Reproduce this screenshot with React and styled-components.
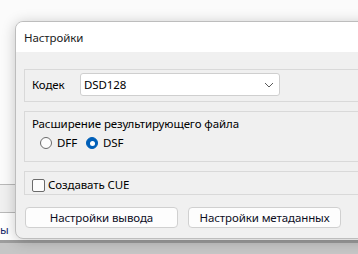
import React from "react";
import styled, { createGlobalStyle } from "styled-components";

const Global = createGlobalStyle`
  html, body { margin: 0; padding: 0; }
  body {
    font-family: "Noto Sans", "Open Sans", sans-serif;
    font-size: 11.5px;
    letter-spacing: -0.1px;
    color: #000;
  }
  * { box-sizing: border-box; }
`;

const Screen = styled.div`
  position: relative;
  width: 358px;
  height: 254px;
  overflow: hidden;
  background: #fafafa;
`;

const BgApp = styled.div`
  display: flex;
  flex-direction: column;
  height: 100%;
`;

const BgTop = styled.div`
  flex: 0 0 184px;
  background: #fbfbfb;
`;

const BgToolbar = styled.div`
  flex: 0 0 29px;
  background: #f0f0f0;
  border-top: 1px solid #b9b9b9;
  border-bottom: 1px solid #b9b9b9;
`;

const BgList = styled.div`
  flex: 0 0 27px;
  background: #ffffff;
  display: flex;
  align-items: flex-end;
  padding-bottom: 2px;
`;

const BgText = styled.span`
  color: #1a2a6a;
  line-height: 16px;
`;

const BgStatus = styled.div`
  flex: 1;
  background: #c6c6c6;
  border-top: 3px solid #9d9d9d;
`;

const Dialog = styled.div`
  position: absolute;
  left: 15px;
  top: 21px;
  width: 380px;
  height: 218px;
  background: #f0f0f0;
  border: 1px solid #bdbdbd;
  border-radius: 8px;
  overflow: hidden;
  box-shadow: 0 2px 14px rgba(0, 0, 0, 0.22);
  display: flex;
  flex-direction: column;
`;

const TitleBar = styled.div`
  flex: 0 0 30px;
  background: #ffffff;
  display: flex;
  align-items: center;
  padding-left: 8px;
  padding-top: 1px;
  color: #1b1b1b;
`;

const Body = styled.div`
  flex: 1;
  display: flex;
  flex-direction: column;
  padding: 17px 0 0 8px;
`;

const Group = styled.div`
  border: 1px solid #d9d9d9;
  margin-bottom: ${(p) => p.$gap ?? 9}px;
  padding: ${(p) => p.$pad};
  display: flex;
  flex-direction: ${(p) => (p.$column ? "column" : "row")};
  align-items: ${(p) => (p.$column ? "flex-start" : "center")};
`;

const Label = styled.span`
  width: 48px;
  line-height: 16px;
`;

const Combo = styled.div`
  width: 200px;
  height: 23px;
  background: #fff;
  border: 1px solid #cfcfcf;
  border-radius: 3px;
  display: flex;
  align-items: center;
  justify-content: space-between;
  padding: 0 5px 0 3px;
`;

const Caption = styled.div`
  line-height: 16px;
  margin-bottom: 3px;
`;

const RadioRow = styled.div`
  display: flex;
  align-items: center;
  gap: 9px;
  padding-left: 8px;
`;

const RadioItem = styled.label`
  display: flex;
  align-items: center;
  gap: 5px;
  line-height: 16px;
`;

const RadioCircle = styled.span`
  width: 12px;
  height: 12px;
  border-radius: 50%;
  background: ${(p) => (p.$on ? "#005fb8" : "#fdfdfd")};
  border: 1px solid ${(p) => (p.$on ? "#005fb8" : "#6b6b6b")};
  display: flex;
  align-items: center;
  justify-content: center;
  &::after {
    content: "";
    display: ${(p) => (p.$on ? "block" : "none")};
    width: 5px;
    height: 5px;
    border-radius: 50%;
    background: #fff;
  }
`;

const CheckItem = styled.label`
  display: flex;
  align-items: center;
  gap: 3px;
  line-height: 16px;
`;

const CheckBox = styled.span`
  width: 13px;
  height: 13px;
  border: 1px solid #6b6b6b;
  border-radius: 2px;
  background: #fdfdfd;
`;

const ButtonRow = styled.div`
  display: flex;
  gap: 10px;
  padding-left: 1px;
  margin-top: 12px;
`;

const Button = styled.div`
  width: 153px;
  height: 21px;
  background: #fdfdfd;
  border: 1px solid #d0d0d0;
  border-radius: 4px;
  display: flex;
  align-items: center;
  justify-content: center;
  color: #0e0e1e;
`;

export default function App() {
  return (
    <>
      <Global />
      <Screen>
        <BgApp>
          <BgTop />
          <BgToolbar />
          <BgList>
            <BgText>ы</BgText>
          </BgList>
          <BgStatus />
        </BgApp>
        <Dialog>
          <TitleBar>Настройки</TitleBar>
          <Body>
            <Group $pad="3px 8px 5px 7px">
              <Label>Кодек</Label>
              <Combo>
                <span>DSD128</span>
                <svg width="10" height="6" viewBox="0 0 10 6">
                  <path d="M1 1 L5 5 L9 1" fill="none" stroke="#5a5a5a" strokeWidth="1" />
                </svg>
              </Combo>
            </Group>
            <Group $column $pad="4px 7px 10px 7px">
              <Caption>Расширение результирующего файла</Caption>
              <RadioRow>
                <RadioItem>
                  <RadioCircle />
                  DFF
                </RadioItem>
                <RadioItem>
                  <RadioCircle $on />
                  DSF
                </RadioItem>
              </RadioRow>
            </Group>
            <Group $gap={0} $pad="5px 7px 1px 7px">
              <CheckItem>
                <CheckBox />
                Создавать CUE
              </CheckItem>
            </Group>
            <ButtonRow>
              <Button>Настройки вывода</Button>
              <Button>Настройки метаданных</Button>
            </ButtonRow>
          </Body>
        </Dialog>
      </Screen>
    </>
  );
}
